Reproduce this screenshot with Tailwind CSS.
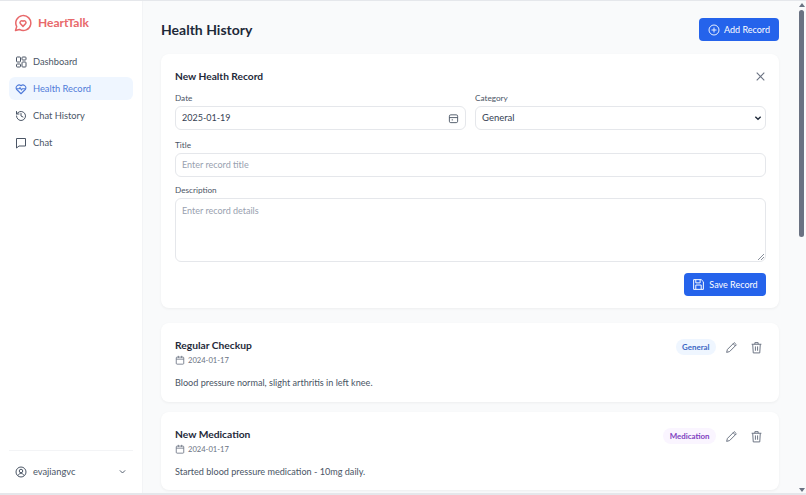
<!DOCTYPE html>
<html lang="en">
  <head>
    <meta charset="UTF-8" />
    <script src="https://cdn.jsdelivr.net/npm/@tailwindcss/browser@4"></script>
    <title>Health History</title>
  </head>
  <body class="w-[806px] h-[495px] overflow-hidden bg-gray-50 font-['Lato',sans-serif]">
    <div class="flex flex-col h-[495px]">
      <div class="h-px bg-gray-200 shrink-0"></div>
      <div class="flex flex-1 min-h-0">
        <!-- sidebar -->
        <aside class="w-[143px] shrink-0 bg-white border-r border-gray-100 flex flex-col px-[9px]">
          <div class="flex items-center gap-[6px] pl-[5px] h-[44px]">
            <svg class="w-[18px] h-[18px] text-[#e8696b]" viewBox="0 0 24 24" fill="none" stroke="currentColor" stroke-width="2" stroke-linecap="round" stroke-linejoin="round">
              <path d="M2 22l1.600-5.200A10 10 0 1 1 7.200 20.600z" />
              <path d="M12 16.500l-3.600-3.700a2.400 2.400 0 0 1 3.600-3.100 2.400 2.400 0 0 1 3.600 3.100z" />
            </svg>
            <span class="text-[12px] font-bold text-[#e8696b]">HeartTalk</span>
          </div>
          <nav class="mt-[5px] flex flex-col gap-[4px] text-[9.3px] text-gray-600">
            <a class="h-[23px] flex items-center gap-[6px] pl-[6px]">
              <svg class="w-[12px] h-[12px]" viewBox="0 0 24 24" fill="none" stroke="currentColor" stroke-width="2"><rect x="3" y="2" width="8" height="10" rx="1.500" /><rect x="14" y="2" width="8" height="6" rx="1.500" /><rect x="14" y="12" width="8" height="10" rx="1.500" /><rect x="3" y="16" width="8" height="6" rx="1.500" /></svg>
              Dashboard
            </a>
            <a class="h-[23px] flex items-center gap-[6px] pl-[6px] bg-blue-50 rounded-md text-[#4f7bd9]">
              <svg class="w-[12px] h-[12px]" viewBox="0 0 24 24" fill="none" stroke="currentColor" stroke-width="2.200" stroke-linejoin="round"><path d="M12 21.500 3 12.500a5.800 5.800 0 0 1 9-7 5.800 5.800 0 0 1 9 7z" /><path d="M2.500 11.500h6l1.500-2.500 3 5 1.500-2.500h7" /></svg>
              Health Record
            </a>
            <a class="h-[23px] flex items-center gap-[6px] pl-[6px]">
              <svg class="w-[12px] h-[12px]" viewBox="0 0 24 24" fill="none" stroke="currentColor" stroke-width="2" stroke-linecap="round" stroke-linejoin="round"><path d="M3 12a9 9 0 1 0 3-6.700L3 8" /><path d="M3 3v5h5" /><path d="M12 7v5l4 2" /></svg>
              Chat History
            </a>
            <a class="h-[23px] flex items-center gap-[6px] pl-[6px]">
              <svg class="w-[12px] h-[12px]" viewBox="0 0 24 24" fill="none" stroke="currentColor" stroke-width="2" stroke-linejoin="round"><path d="M3 3h18v15H8l-5 4z" /></svg>
              Chat
            </a>
          </nav>
          <div class="mt-auto border-t border-gray-100 h-[42px] flex items-center pl-[6px] pr-[6px] mb-[1px] text-[9.3px] text-gray-600">
            <svg class="w-[12px] h-[12px] mr-[6px]" viewBox="0 0 24 24" fill="none" stroke="currentColor" stroke-width="2"><circle cx="12" cy="12" r="10" /><circle cx="12" cy="10" r="3.500" /><path d="M6 19c1-3 4-4 6-4s5 1 6 4" /></svg>
            evajiangvc
            <svg class="w-[9px] h-[9px] ml-auto" viewBox="0 0 24 24" fill="none" stroke="currentColor" stroke-width="2.500"><path d="m5 9 7 7 7-7" /></svg>
          </div>
        </aside>

        <!-- main -->
        <main class="flex-1 min-w-0 px-[18px] pt-[17px] overflow-hidden">
          <div class="flex items-center justify-between h-[23px]">
            <h1 class="text-[14px] font-bold text-gray-800">Health History</h1>
            <button class="h-[23px] w-[80px] bg-[#2563eb] rounded text-white text-[9px] flex items-center justify-center gap-[4px]">
              <svg class="w-[12px] h-[12px]" viewBox="0 0 24 24" fill="none" stroke="currentColor" stroke-width="1.800"><circle cx="12" cy="12" r="10" /><path d="M12 7v10M7 12h10" /></svg>
              Add Record
            </button>
          </div>

          <section class="mt-[13px] h-[254px] bg-white rounded-lg shadow-[0_1px_3px_rgba(0,0,0,0.05)] pl-[14px] pr-[13px] pt-[14px]">
            <div class="flex items-center justify-between h-[16px]">
              <h2 class="mt-[2px] text-[10.2px] font-bold text-gray-800">New Health Record</h2>
              <svg class="w-[13px] h-[13px] text-gray-500 mr-[-1px]" viewBox="0 0 24 24" fill="none" stroke="currentColor" stroke-width="2"><path d="M5 5l14 14M19 5 5 19" /></svg>
            </div>
            <div class="grid grid-cols-2 gap-[9px] mt-[7px]">
              <div>
                <label class="block text-[8.2px] leading-[14px] text-gray-600 mb-[1px]">Date</label>
                <div class="h-[24px] border border-gray-200 rounded-md flex items-center justify-between px-[6px] text-[9px] text-gray-700">
                  2025-01-19
                  <svg class="w-[11px] h-[11px] text-gray-600" viewBox="0 0 24 24" fill="none" stroke="currentColor" stroke-width="2"><rect x="3" y="4" width="18" height="17" rx="3" /><path d="M3 10h18M8 15h3" /></svg>
                </div>
              </div>
              <div>
                <label class="block text-[8.2px] leading-[14px] text-gray-600 mb-[1px]">Category</label>
                <div class="h-[24px] border border-gray-200 rounded-md flex items-center justify-between px-[6px] text-[9.5px] text-gray-700">
                  General
                  <svg class="w-[8px] h-[8px] mr-[-3px] text-gray-800" viewBox="0 0 24 24" fill="none" stroke="currentColor" stroke-width="4"><path d="m4 8 8 8 8-8" /></svg>
                </div>
              </div>
            </div>
            <label class="block text-[8.2px] leading-[14px] text-gray-600 mt-[8px] mb-[1px]">Title</label>
            <div class="h-[24px] border border-gray-200 rounded-md flex items-center px-[6px] text-[9px] text-gray-400">Enter record title</div>
            <label class="block text-[8.2px] leading-[14px] text-gray-600 mt-[6px] mb-[1px]">Description</label>
            <div class="relative h-[64px] border border-gray-200 rounded-md px-[6px] pt-[5px] text-[9px] text-gray-400">
              Enter record details
              <svg class="absolute right-[1px] bottom-[1px] w-[6px] h-[6px] text-gray-500" viewBox="0 0 6 6" stroke="currentColor" stroke-width="0.8"><path d="M0 6 6 0M3 6l3-3" /></svg>
            </div>
            <div class="flex justify-end mt-[11px]">
              <button class="h-[23px] w-[82px] bg-[#2563eb] rounded text-white text-[9px] flex items-center justify-center gap-[4px]">
                <svg class="w-[13px] h-[13px]" viewBox="0 0 24 24" fill="none" stroke="currentColor" stroke-width="1.800" stroke-linejoin="round"><path d="M3 3h14l4 4v14H3z" /><path d="M7 3v6h8V3M7 21v-8h10v8" /></svg>
                Save Record
              </button>
            </div>
          </section>

          <section class="mt-[15px] h-[79px] bg-white rounded-lg shadow-[0_1px_3px_rgba(0,0,0,0.05)] px-[14px] pt-[14px] flex justify-between">
            <div>
              <h3 class="text-[10.25px] leading-[16px] font-bold text-gray-800">Regular Checkup</h3>
              <div class="flex items-center gap-[3px] text-[7.6px] leading-[14px] text-gray-500">
                <svg class="w-[10px] h-[10px]" viewBox="0 0 24 24" fill="none" stroke="currentColor" stroke-width="2"><rect x="3" y="5" width="18" height="17" rx="2" /><path d="M3 10h18M8 2v5M16 2v5" /></svg>
                2024-01-17
              </div>
              <p class="mt-[9px] text-[9.1px] leading-[14px] text-gray-600">Blood pressure normal, slight arthritis in left knee.</p>
            </div>
            <div class="flex items-start">
              <span class="mt-[2px] h-[16px] px-[6.5px] rounded-full bg-blue-50 text-[#3b66c4] text-[7.9px] font-bold leading-[16px]">General</span>
              <svg class="ml-[8.5px] mt-[3.500px] w-[13px] h-[13px] text-gray-500" viewBox="0 0 24 24" fill="none" stroke="currentColor" stroke-width="1.800" stroke-linejoin="round"><path d="M3 21l1.500-5.500L17 3l4 4L8.500 19.500z" /><path d="m15 5 4 4" /></svg>
              <svg class="ml-[12px] mr-[2.5px] mt-[3.500px] w-[13px] h-[13px] text-gray-500" viewBox="0 0 24 24" fill="none" stroke="currentColor" stroke-width="1.800"><path d="M3 6h18M9 6V3h6v3M5 6l1 16h12l1-16M10 10v8M14 10v8" /></svg>
            </div>
          </section>

          <section class="mt-[10px] h-[78px] bg-white rounded-lg shadow-[0_1px_3px_rgba(0,0,0,0.05)] px-[14px] pt-[14px] flex justify-between">
            <div>
              <h3 class="text-[10.25px] leading-[16px] font-bold text-gray-800">New Medication</h3>
              <div class="flex items-center gap-[3px] text-[7.6px] leading-[14px] text-gray-500">
                <svg class="w-[10px] h-[10px]" viewBox="0 0 24 24" fill="none" stroke="currentColor" stroke-width="2"><rect x="3" y="5" width="18" height="17" rx="2" /><path d="M3 10h18M8 2v5M16 2v5" /></svg>
                2024-01-17
              </div>
              <p class="mt-[9px] text-[9.1px] leading-[14px] text-gray-600">Started blood pressure medication - 10mg daily.</p>
            </div>
            <div class="flex items-start">
              <span class="mt-[2px] h-[16px] px-[6.5px] rounded-full bg-purple-50 text-[#7e3fc0] text-[7.9px] font-bold leading-[16px]">Medication</span>
              <svg class="ml-[8.5px] mt-[3.500px] w-[13px] h-[13px] text-gray-500" viewBox="0 0 24 24" fill="none" stroke="currentColor" stroke-width="1.800" stroke-linejoin="round"><path d="M3 21l1.500-5.500L17 3l4 4L8.500 19.500z" /><path d="m15 5 4 4" /></svg>
              <svg class="ml-[12px] mr-[2.5px] mt-[3.500px] w-[13px] h-[13px] text-gray-500" viewBox="0 0 24 24" fill="none" stroke="currentColor" stroke-width="1.800"><path d="M3 6h18M9 6V3h6v3M5 6l1 16h12l1-16M10 10v8M14 10v8" /></svg>
            </div>
          </section>
        </main>

        <!-- scrollbar -->
        <div class="w-[9px] shrink-0 flex flex-col items-center bg-gray-50">
          <div class="mt-[2px] w-0 h-0 border-x-[3px] border-x-transparent border-b-[4px] border-b-gray-500"></div>
          <div class="mt-[3px] w-[5px] h-[227px] bg-gray-500 rounded-sm"></div>
          <div class="mt-auto mb-[1px] w-0 h-0 border-x-[3px] border-x-transparent border-t-[4px] border-t-gray-500"></div>
        </div>
      </div>
      <div class="h-[2px] bg-gray-200 shrink-0"></div>
    </div>
  </body>
</html>
